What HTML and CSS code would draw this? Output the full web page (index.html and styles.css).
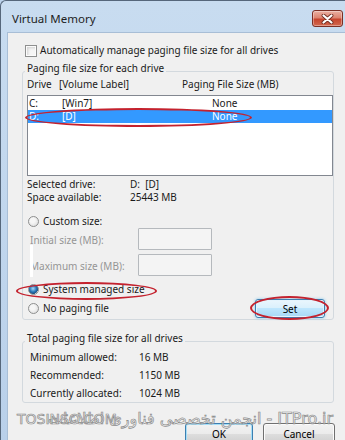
FILE: index.html
```html
<!DOCTYPE html>
<html lang="en">

<head>
    <meta charset="UTF-8">
    <meta name="viewport" content="width=device-width, initial-scale=1.0">
    <title>Virtual Memory</title>
    <link rel="stylesheet" href="styles.css">
</head>

<body>
    <div class="window">
        <div class="titlebar">
            <span class="title">Virtual Memory</span>
            <button class="close-btn" aria-label="Close">
                <svg width="13" height="10" viewBox="0 0 13 10">
                    <path d="M2.5 1.5 L10.5 8.5 M10.5 1.5 L2.5 8.5" stroke="#6b2a20" stroke-width="3.8" stroke-linecap="round" fill="none" />
                    <path d="M2.5 1.5 L10.5 8.5 M10.5 1.5 L2.5 8.5" stroke="#ffffff" stroke-width="2.2" stroke-linecap="round" fill="none" />
                </svg>
            </button>
        </div>
        <div class="client">
            <label class="check-row"><span class="checkbox"></span>Automatically manage paging file size for all drives</label>

            <div class="group group-drives">
                <div class="group-title">Paging file size for each drive</div>
                <div class="list-head">
                    <span class="head-drive">Drive</span>
                    <span class="head-label">[Volume Label]</span>
                    <span>Paging File Size (MB)</span>
                </div>
                <div class="listbox">
                    <div class="list-row">
                        <span class="cell-drive">C:</span>
                        <span class="cell-label">[Win7]</span>
                        <span>None</span>
                    </div>
                    <div class="list-row selected">
                        <span class="cell-drive">D:</span>
                        <span class="cell-label">[D]</span>
                        <span>None</span>
                        <span class="mark mark-row"></span>
                    </div>
                </div>
                <div class="info-row first"><span class="info-label">Selected drive:</span><span>D:&nbsp; [D]</span></div>
                <div class="info-row"><span class="info-label">Space available:</span><span>25443 MB</span></div>

                <div class="radio-row radio-custom"><span class="radio"></span>Custom size:</div>
                <div class="field-row">
                    <span class="field-label">Initial size (MB):</span>
                    <span class="textbox"></span>
                </div>
                <div class="field-row second">
                    <span class="field-label">Maximum size (MB):</span>
                    <span class="textbox"></span>
                    <span class="scratch"></span>
                </div>
                <div class="radio-row radio-system">
                    <span class="radio checked"></span>System managed size
                    <span class="mark mark-system"></span>
                </div>
                <div class="radio-row radio-none">
                    <span class="radio"></span>No paging file
                    <span class="set-wrap">
                        <button class="btn btn-set">Set</button>
                        <span class="mark mark-set"></span>
                    </span>
                </div>
            </div>

            <div class="group group-total">
                <div class="group-title">Total paging file size for all drives</div>
                <div class="total-row first"><span class="total-label">Minimum allowed:</span><span>16 MB</span></div>
                <div class="total-row"><span class="total-label">Recommended:</span><span>1150 MB</span></div>
                <div class="total-row"><span class="total-label">Currently allocated:</span><span>1024 MB</span></div>
            </div>

            <div class="watermark">
                <span class="wm-main" dir="rtl">ITPro.ir - انجمن تخصصی فناوری اطلاعات</span>
                <span class="wm-site">TOSINSO.COM</span>
            </div>

            <div class="buttons">
                <button class="btn btn-ok">OK</button>
                <button class="btn btn-cancel">Cancel</button>
            </div>
        </div>
    </div>
</body>

</html>
```

FILE: styles.css
```css
* {
    box-sizing: border-box;
}

body {
    margin: 0;
    width: 345px;
    height: 440px;
    overflow: hidden;
    font-family: "Noto Sans", "Segoe UI", sans-serif;
    font-size: 10px;
    color: #1a1a1a;
    background-color: #bcd3ec;
}

.window {
    height: 440px;
    display: flex;
    flex-direction: column;
    background: linear-gradient(to bottom, #c8dcf0, #b9d0ea);
    border-top: 1px solid #56677b;
    border-left: 1px solid #56677b;
    border-top-left-radius: 6px;
    padding-left: 6px;
}

.titlebar {
    height: 31px;
    flex-shrink: 0;
    display: flex;
    justify-content: space-between;
    align-items: flex-start;
    padding: 9px 2px 0 5px;
}

.title {
    margin-top: 1px;
    font-size: 11.5px;
    line-height: 16px;
    color: #1e1e1e;
}

.close-btn {
    width: 31px;
    height: 17px;
    padding: 0;
    display: flex;
    align-items: center;
    justify-content: center;
    border: 1px solid #7b2f25;
    border-radius: 3px;
    background: linear-gradient(to bottom, #eab0a3 0%, #dd8470 45%, #c6452e 55%, #d2684f 100%);
    box-shadow: inset 0 0 0 1px rgba(255, 255, 255, 0.35);
}

.client {
    flex: 1;
    overflow: hidden;
    background-color: #f0f0f0;
    box-shadow: inset 1px 1px 0 #a8bed6;
}

/* checkbox + radio */
.check-row {
    display: flex;
    align-items: center;
    height: 13px;
    line-height: 13px;
    margin-top: 12px;
    padding-left: 18px;
}

.checkbox {
    width: 12px;
    height: 12px;
    margin-right: 3px;
    border: 1px solid #8e8f8f;
    background-color: #f6f6f6;
    box-shadow: inset 0 0 0 1px #fbfbfb, inset 2px 2px 3px #cfcfcf;
}

.radio {
    width: 11px;
    height: 11px;
    margin-right: 4px;
    border: 1px solid #8e8f8f;
    border-radius: 50%;
    background: radial-gradient(circle at 40% 40%, #f6f6f6 30%, #d6d6d6 100%);
    flex-shrink: 0;
}

.radio.checked {
    background: radial-gradient(circle at 45% 40%, #a8dbfa 0%, #2a77b8 45%, #1b4f80 70%, #e4e4e4 72%, #f4f4f4 100%);
}

/* group boxes */
.group {
    margin: 14px 11px 0 15px;
    border: 1px solid #d3d9de;
    border-radius: 3px;
}

.group-title {
    width: max-content;
    margin-top: -10px;
    padding: 0 2px;
    line-height: 13px;
    background-color: #f0f0f0;
}

.group-drives {
    padding: 0 0 1px 4px;
}

.group-drives .group-title {
    margin-left: -2px;
}

.list-head {
    display: flex;
    margin-top: 3px;
    line-height: 13px;
}

.head-drive {
    width: 32px;
}

.head-label {
    width: 123px;
}

.listbox {
    height: 81px;
    margin-top: 4px;
    padding-top: 1px;
    border: 1px solid #828790;
    background-color: #ffffff;
}

.list-row {
    position: relative;
    display: flex;
    line-height: 13px;
    padding-left: 1px;
}

.list-row.selected {
    background-color: #3399ff;
    color: #ffffff;
}

.cell-drive {
    width: 33px;
}

.cell-label {
    width: 150px;
}

.info-row {
    display: flex;
    line-height: 13px;
}

.info-row.first {
    margin-top: 2px;
}

.info-label {
    width: 103px;
}

.radio-row {
    position: relative;
    display: flex;
    align-items: center;
    line-height: 13px;
    padding-left: 1px;
}

.radio-custom {
    margin-top: 11px;
}

.field-row {
    position: relative;
    display: flex;
    align-items: center;
    height: 22px;
    padding-left: 3px;
    color: #959595;
}

.field-row.second {
    margin-top: 4px;
}

.field-label {
    width: 108px;
    padding-top: 2px;
    line-height: 13px;
}

.textbox {
    width: 74px;
    height: 22px;
    border: 1px solid #b5b9bd;
    border-radius: 1px;
    background-color: #f4f4f4;
}

.scratch {
    position: absolute;
    left: 3px;
    top: -9px;
    width: 3px;
    height: 32px;
    background-color: #ffffff;
}

.radio-system {
    margin-top: 7px;
}

.radio-none {
    height: 19px;
    margin-top: 3px;
}

.set-wrap {
    position: relative;
    margin-left: auto;
    margin-right: 8px;
    display: flex;
}

/* hand-drawn red marks */
.mark {
    position: absolute;
    border: 2px solid #c4222e;
    border-radius: 50%;
}

.mark-row {
    left: -3px;
    top: -2px;
    width: 227px;
    height: 19px;
}

.mark-system {
    left: -11px;
    top: -1px;
    width: 141px;
    height: 18px;
}

.mark-set {
    left: -5px;
    top: -3px;
    width: 79px;
    height: 24px;
}

.group-total {
    margin-top: 21px;
    padding: 0 0 2px 7px;
}

.group-total .group-title {
    margin-left: -5px;
}

.total-row {
    display: flex;
    line-height: 13px;
    margin-top: 5px;
}

.total-row.first {
    margin-top: 6px;
}

.total-label {
    width: 109px;
}

/* watermark */
.watermark {
    position: relative;
    height: 20px;
    padding: 9px 12px 0 0;
    line-height: 14px;
    text-align: right;
    font-family: "DejaVu Sans", sans-serif;
    font-size: 16px;
    color: rgba(255, 255, 255, 0.55);
    -webkit-text-stroke: 0.7px #8a8a8a;
    white-space: nowrap;
}

.wm-site {
    position: absolute;
    left: 10px;
    top: 9px;
    font-size: 14px;
}

/* buttons */
.buttons {
    display: flex;
    justify-content: flex-end;
    gap: 10px;
    padding-right: 10px;
}

.btn {
    height: 22px;
    padding: 0;
    font-family: inherit;
    font-size: 10px;
    color: #000000;
    border: 1px solid #707070;
    border-radius: 3px;
    background: linear-gradient(to bottom, #f2f2f2 0%, #ebebeb 50%, #dddddd 50%, #cfcfcf 100%);
    box-shadow: inset 0 0 0 1px #fcfcfc;
}

.btn-ok {
    width: 68px;
    border-color: #3c7fb1;
    box-shadow: inset 0 0 0 1px #a6def7;
}

.btn-cancel {
    width: 72px;
}

.btn-set {
    width: 70px;
    height: 19px;
    border-color: #3c7fb1;
    background: linear-gradient(to bottom, #eaf6fd 0%, #d9f0fc 50%, #bee6fd 50%, #a7d9f5 100%);
    box-shadow: 0 0 3px #7fc6ee, inset 0 0 0 1px #e4f4fd;
}
```
